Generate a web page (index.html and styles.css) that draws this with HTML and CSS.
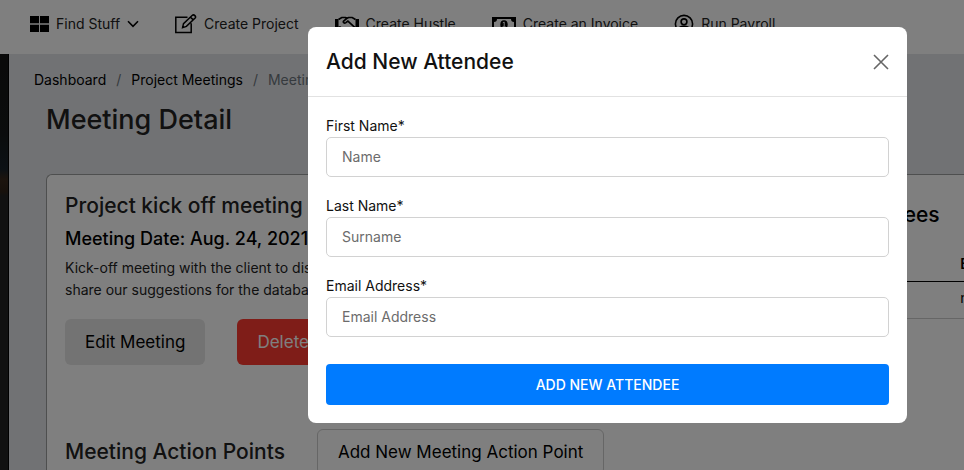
FILE: index.html
```html
<!DOCTYPE html>
<html lang="en">
<head>
<meta charset="utf-8">
<meta name="viewport" content="width=device-width, initial-scale=1">
<title>Meeting Detail</title>
<link rel="stylesheet" href="styles.css">
</head>
<body>
<header class="topbar">
  <nav class="topnav" aria-label="Main">
    <a class="nav-link" href="#">
      <svg class="icon-grid" viewBox="0 0 19 16" aria-hidden="true"><path fill="currentColor" d="M0 0h9v7.3H0zM10 0h9v7.3h-9zM0 8.7h9V16H0zM10 8.7h9V16h-9z"/></svg>
      <span>Find Stuff</span>
      <svg class="icon-caret" viewBox="0 0 12 8" aria-hidden="true"><path d="M1 1.2 6 6.4l5-5.2" fill="none" stroke="currentColor" stroke-width="1.6"/></svg>
    </a>
    <a class="nav-link" href="#">
      <svg class="icon" viewBox="0 0 22 20" aria-hidden="true"><path d="M12.5 3.2H.8v15.2h15.4V9.2M7.6 13.6l.9-4 8.6-8.1c.9-.8 2-.7 2.8.1s.8 1.900 0 2.700l-8.500 8.100zM15.500 3.200l2.800 2.700" fill="none" stroke="currentColor" stroke-width="1.5"/></svg>
      <span>Create Project</span>
    </a>
    <a class="nav-link" href="#">
      <svg class="icon-wide" viewBox="0 0 24 20" aria-hidden="true"><path d="M0 5h3.500v9H0zM20.500 5H24v9h-3.500z" fill="currentColor"/><path d="M3.500 5.500 6.800 3.500h3.600l1.600.8 1.600-.8h3.600l3.300 2M12.500 3.900 8.600 7.100c-.9.900.5 2.700 2.300 1.500l2-1.500 6.300 5.800M3.500 13h1.700l4.500 4h4l5.500-4h1.300" fill="none" stroke="currentColor" stroke-width="1.700"/></svg>
      <span>Create Hustle</span>
    </a>
    <a class="nav-link" href="#">
      <svg class="icon-wide" viewBox="0 0 24 20" aria-hidden="true"><path d="M1 4h22v13H1z" fill="none" stroke="currentColor" stroke-width="2"/><path d="M2 5h3a3 3 0 0 1-3 3zM22 5h-3a3 3 0 0 0 3 3zM2 16h3a3 3 0 0 0-3-3zM22 16h-3a3 3 0 0 1 3-3z" fill="currentColor"/><ellipse cx="12" cy="10.500" rx="3.700" ry="4.300" fill="currentColor"/><path d="m10.800 8.800 1.400-.8v4.500M10.600 12.800h3" fill="none" stroke="#fff" stroke-width="1"/></svg>
      <span>Create an Invoice</span>
    </a>
    <a class="nav-link" href="#">
      <svg class="icon-user" viewBox="0 0 20 20" aria-hidden="true"><g fill="none" stroke="currentColor" stroke-width="1.600"><circle cx="10" cy="10" r="8.600"/><circle cx="10" cy="7.800" r="2.900"/><path d="M4.500 16c.3-2.500 2.300-3.600 5.500-3.600s5.200 1.100 5.500 3.600"/></g></svg>
      <span>Run Payroll</span>
    </a>
  </nav>
</header>
<div class="shell">
  <aside class="sidebar" aria-hidden="true"></aside>
  <main class="content">
    <nav aria-label="Breadcrumb">
      <ol class="breadcrumb">
        <li><a href="#">Dashboard</a></li>
        <li><a href="#">Project Meetings</a></li>
        <li class="current">Meeting Detail</li>
      </ol>
    </nav>
    <h1 class="page-title">Meeting Detail</h1>
    <section class="card">
      <div class="meeting">
        <h2 class="heading">Project kick off meeting</h2>
        <h3 class="date">Meeting Date: Aug. 24, 2021</h3>
        <p class="summary">Kick-off meeting with the client to discuss<br>share our suggestions for the database</p>
        <div class="actions">
          <button class="btn btn-light" type="button">Edit Meeting</button>
          <button class="btn btn-danger" type="button">Delete Meeting</button>
        </div>
        <div class="points">
          <h2 class="heading">Meeting Action Points</h2>
          <button class="btn btn-outline" type="button">Add New Meeting Action Point</button>
        </div>
      </div>
      <div class="attendees">
        <h2 class="heading">Meeting Attendees</h2>
        <table class="people">
          <thead><tr><th>Name</th><th>Email</th></tr></thead>
          <tbody><tr><td></td><td>m</td></tr></tbody>
        </table>
      </div>
    </section>
  </main>
</div>
<div class="overlay">
  <div class="modal" role="dialog" aria-modal="true" aria-labelledby="modal-title">
    <div class="modal-head">
      <h2 class="modal-title" id="modal-title">Add New Attendee</h2>
      <button class="close" type="button" aria-label="Close"><svg viewBox="0 0 16 16" aria-hidden="true"><path d="m1 1 14 14M15 1 1 15" stroke="currentColor" stroke-width="1.600"/></svg></button>
    </div>
    <form class="modal-body">
      <div class="field"><label for="first">First Name*</label><input id="first" type="text" placeholder="Name"></div>
      <div class="field"><label for="last">Last Name*</label><input id="last" type="text" placeholder="Surname"></div>
      <div class="field"><label for="email">Email Address*</label><input id="email" type="email" placeholder="Email Address"></div>
      <button class="submit" type="submit">Add New Attendee</button>
    </form>
  </div>
</div>
</body>
</html>
```
FILE: styles.css
```css
* { box-sizing: border-box; }
html, body { height: 100%; }
body {
  margin: 0;
  display: flex;
  flex-direction: column;
  overflow: hidden;
  background: #fff;
  color: #222;
  font-family: Inter, "Liberation Sans", sans-serif;
  font-size: 14px;
  line-height: 22px;
}
h1, h2, h3, p, ol { margin: 0; padding: 0; }
h1, h2, h3 { font-weight: 500; }
a { color: inherit; text-decoration: none; }
button, input { font: inherit; }
svg { display: block; flex: none; }

.topbar { flex: none; padding: 13px 30px 19px; }
.topnav { display: flex; gap: 36px; white-space: nowrap; }
.nav-link { display: flex; align-items: center; gap: 7px; }
.nav-link svg { color: #000; }
.icon-grid { width: 19px; height: 16px; }
.icon-caret { width: 12px; height: 8px; }
.icon { width: 22px; height: 20px; }
.icon-wide { width: 24px; height: 20px; }
.icon-user { width: 20px; height: 20px; }

.shell { flex: 1; display: flex; min-height: 0; }
.sidebar {
  flex: none;
  width: 9px;
  border-right: 1px solid #000;
  background: linear-gradient(#141414 0, #16191a 80px, #18222a 115px, #38281c 125px, #2e2218 138px, #222 142px);
}
.content {
  flex: 1;
  min-width: 0;
  padding: 15px 0 0 25px;
  background: #e3e5e9;
}
.breadcrumb { display: flex; list-style: none; white-space: nowrap; color: #000; }
.breadcrumb li + li::before { content: "/"; margin: 0 10px; color: #6c757d; }
.breadcrumb .current { color: #6c757d; }
.page-title { margin: 11px 12px 0; font-size: 27px; line-height: 36px; }

.card {
  display: flex;
  margin: 36px 0 0 12px;
  border: 1px solid #9c9e9e;
  border-right: 0;
  border-radius: 6px 0 0 0;
  background: #fff;
  white-space: nowrap;
}
.meeting { flex: 3; min-width: 0; padding: 18px; }
.attendees { flex: 1; min-width: 0; padding: 27px 0 0 26px; color: #000; }
.heading { font-size: 21px; line-height: 26px; }
.date { margin-top: 8px; font-size: 18px; line-height: 24px; color: #000; }
.summary { margin-top: 6px; }
.actions { display: flex; gap: 32px; margin-top: 18px; }
.btn {
  height: 46px;
  padding: 0 20px;
  border: 0;
  border-radius: 6px;
  font-size: 17px;
  color: #000;
}
.btn-light { background: #e6e6e6; }
.btn-danger { background: #ff3b30; color: #fff; }
.btn-outline { border: 1px solid #ccc; background: none; }
.points { display: flex; align-items: center; gap: 32px; margin-top: 64px; }

.people { width: 420px; margin-top: 25px; border-collapse: collapse; table-layout: fixed; text-align: left; }
.people th { height: 28px; padding: 0 0 6px; font-weight: 600; border-bottom: 1px solid #000; }
.people td { height: 37px; padding: 0 0 4px; border-bottom: 1px solid #ccc; }

.overlay {
  position: fixed;
  inset: 0;
  padding: 27px 57px 0 308px;
  background: rgba(0, 0, 0, 0.5);
}
.modal { border-radius: 8px; background: #fff; color: #111; }
.modal-head {
  display: flex;
  align-items: center;
  justify-content: space-between;
  padding: 18px;
  border-bottom: 1px solid #e2e2e2;
}
.modal-title { font-size: 21px; line-height: 33px; }
.close { padding: 0; border: 0; background: none; color: #666; }
.close svg { width: 16px; height: 16px; }
.modal-body { padding: 18px; }
.field { display: flex; flex-direction: column; margin-bottom: 18px; }
.field input {
  width: 100%;
  height: 40px;
  padding: 0 15px 2px;
  border: 1px solid #d2d2d2;
  border-radius: 5px;
  background: #fff;
}
.field input::placeholder { color: #6c6c6c; opacity: 1; }
.submit {
  width: 100%;
  height: 41px;
  margin-top: 9px;
  border: 0;
  border-radius: 4px;
  background: #007bff;
  color: #fff;
  font-weight: 500;
  text-transform: uppercase;
}
```
